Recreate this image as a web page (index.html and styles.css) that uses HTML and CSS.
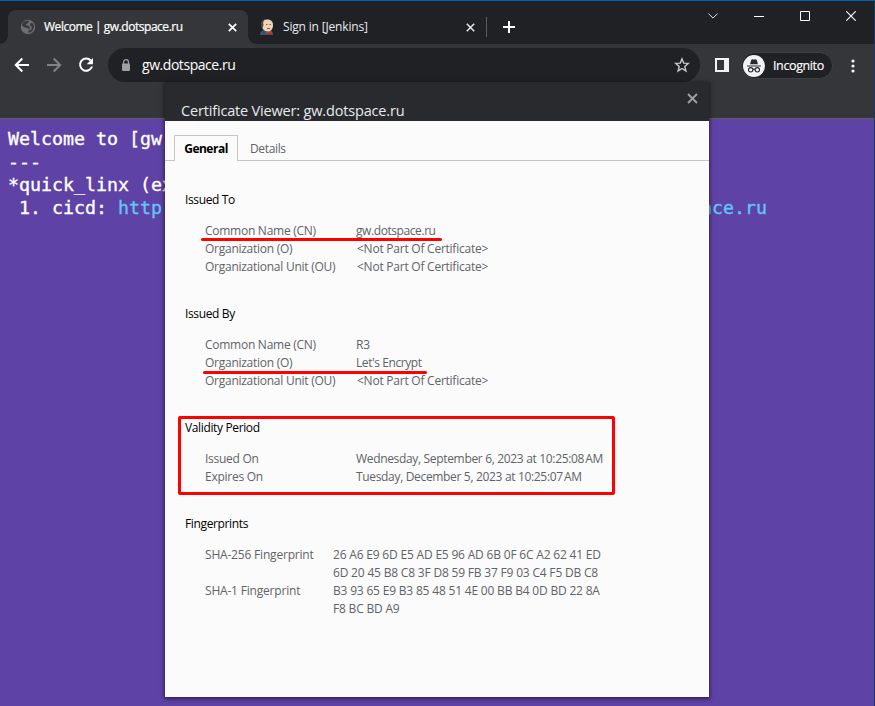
FILE: index.html
```html
<!DOCTYPE html>
<html lang="en">
<head>
<meta charset="utf-8">
<title>Welcome | gw.dotspace.ru</title>
<link rel="stylesheet" href="styles.css">
</head>
<body>
<div class="window">
  <header class="tabstrip">
    <div class="tab active">
      <svg class="favicon" width="16" height="16" viewBox="0 0 16 16"><circle cx="8" cy="8" r="7.2" fill="#6b6e73"/><path d="M3 3.500c2-2 5-2 6-1.500L8 4.200 6 5l.5 1.600L9 7l1 2-1 1.500L7.500 9 4 8.200 2 6zM10.500 4l2.500.5 1 3-1 3.500-2 2-3 .8.5-2 3-1.500.3-2L10 6z" fill="#37383c"/></svg>
      <span class="tab-title t1">Welcome | gw.dotspace.ru</span>
      <svg class="tab-x" width="9" height="9" viewBox="0 0 9 9"><path d="M.8.8l7.400 7.400M8.200.8L.8 8.200" stroke="#fff" stroke-width="1.700"/></svg>
    </div>
    <div class="tab">
      <svg class="favicon" width="16" height="16" viewBox="0 0 16 16"><path d="M1 16l.5-3L5 11h6l3 3v2z" fill="#315769"/><path d="M2.500 5c0-3 2-4.500 5.500-4.500S14 2 14 6c0 4-2 6.500-5 6.500C5.500 12.500 2.500 10 2.500 5z" fill="#efd4b5"/><path d="M2.500 8C1 4 3 .8 6 .6 4 2 4 4 4.500 6L3.500 9z" fill="#504742"/><path d="M7 5.500h1.500m2 0H12M8 9.500h3" stroke="#756155"/><path d="M7 12l2.500 1.200L13 12v3.500l-3-1.200L7 15.500z" fill="#d52c30"/></svg>
      <span class="tab-title t2">Sign in [Jenkins]</span>
      <svg class="tab-x" width="9" height="9" viewBox="0 0 9 9"><path d="M.8.8l7.400 7.400M8.200.8L.8 8.200" stroke="#e8eaed" stroke-width="1.500"/></svg>
    </div>
    <i class="separator"></i>
    <svg class="new-tab" width="12" height="12" viewBox="0 0 12 12"><path d="M6 0v12M0 6h12" stroke="#fff" stroke-width="2"/></svg>
    <div class="controls">
      <svg width="10" height="6" viewBox="0 0 10 6"><path d="M.4.500L5 5.100 9.600.500" fill="none" stroke="#e0e0e0"/></svg>
      <svg width="10" height="10" viewBox="0 0 10 10"><path d="M0 5.500h10" stroke="#fff"/></svg>
      <svg width="10" height="10" viewBox="0 0 10 10"><path d="M.5.5h9v9h-9z" fill="none" stroke="#fff"/></svg>
      <svg width="10" height="10" viewBox="0 0 10 10"><path d="M.3.3l9.400 9.400M9.700.3L.3 9.700" stroke="#fff" stroke-width="1.100"/></svg>
    </div>
  </header>
  <nav class="toolbar">
    <svg class="back" width="16" height="16" viewBox="0 0 16 16"><path d="M15 8H2M8.300 1.500L1.800 8l6.500 6.500" fill="none" stroke="#fff" stroke-width="2"/></svg>
    <svg class="forward" width="16" height="16" viewBox="0 0 16 16"><path d="M1 8h13M7.700 1.500L14.200 8l-6.500 6.500" fill="none" stroke="#808185" stroke-width="2"/></svg>
    <svg class="reload" width="16" height="16" viewBox="0 0 16 16"><path d="M12.700 3.500A6.100 6.100 0 1 0 14 9.500" fill="none" stroke="#fff" stroke-width="2"/><path d="M15 1v6.300H8.700z" fill="#fff"/></svg>
    <div class="omnibox">
      <svg width="10" height="13" viewBox="0 0 10 13"><path d="M2.500 5V3.200a2.500 2.500 0 0 1 5 0V5" fill="none" stroke="#9aa0a6" stroke-width="1.300"/><rect x="1" y="4.500" width="8" height="7.500" rx="1" fill="#9aa0a6"/></svg>
      <span class="url">gw.dotspace.ru</span>
      <svg class="star" width="16" height="16" viewBox="0 0 16 16"><path d="M8 1.900l1.700 4.200 4.600.3-3.500 3 1.100 4.500L8 11.500l-3.900 2.400 1.100-4.500-3.500-3 4.600-.3z" fill="none" stroke="#c7cacd" stroke-width="1.400"/></svg>
    </div>
    <svg class="side" width="14" height="14" viewBox="0 0 14 14"><path d="M0 0h14v14H0zM2 2v10h7V2z" fill="#f1f3f4" fill-rule="evenodd"/></svg>
    <div class="profile">
      <svg width="22" height="22" viewBox="0 0 22 22"><circle cx="11" cy="11" r="11" fill="#f1f3f4"/><path d="M7 9.200l1.300-4.500 1.500-.4 1.200.4 1.200-.4 1.500.4L15 9.200z" fill="#292a2d"/><path d="M4 11h14M10 14.500q1-.8 2 0" fill="none" stroke="#292a2d" stroke-width="1.100"/><circle cx="7.700" cy="14.800" r="2.200" fill="none" stroke="#292a2d" stroke-width="1.100"/><circle cx="14.300" cy="14.800" r="2.200" fill="none" stroke="#292a2d" stroke-width="1.100"/></svg>
      <span>Incognito</span>
    </div>
    <svg class="menu" width="4" height="14" viewBox="0 0 4 14" fill="#f1f3f4"><circle cx="2" cy="2" r="1.600"/><circle cx="2" cy="7" r="1.600"/><circle cx="2" cy="12" r="1.600"/></svg>
  </nav>
  <main class="page">
    <div>Welcome to [gw</div>
    <div>---</div>
    <div>*quick_linx (ex</div>
    <div class="link-row"><span> 1. cicd: </span><a><span>http</span><span>ace.ru</span></a></div>
  </main>

  <section class="dialog">
    <div class="dialog-head"><h1>Certificate Viewer: gw.dotspace.ru</h1>
      <svg width="11" height="11" viewBox="0 0 11 11"><path d="M1 1l9 9M10 1l-9 9" stroke="#9aa0a6" stroke-width="1.900"/></svg>
    </div>
    <div class="dialog-tabs"><b>General</b><span>Details</span></div>
    <div class="details">
      <section>
        <h2>Issued To</h2>
        <dl>
          <dt><span class="mark m1">Common Name (CN)</span></dt><dd class="domain">gw.dotspace.ru</dd>
          <dt>Organization (O)</dt><dd class="none">&lt;Not Part Of Certificate&gt;</dd>
          <dt>Organizational Unit (OU)</dt><dd class="none">&lt;Not Part Of Certificate&gt;</dd>
        </dl>
      </section>
      <section>
        <h2>Issued By</h2>
        <dl>
          <dt>Common Name (CN)</dt><dd>R3</dd>
          <dt><span class="mark m2">Organization (O)</span></dt><dd class="domain">Let's Encrypt</dd>
          <dt>Organizational Unit (OU)</dt><dd class="none">&lt;Not Part Of Certificate&gt;</dd>
        </dl>
      </section>
      <section class="validity">
        <h2>Validity Period</h2>
        <dl>
          <dt>Issued On</dt><dd class="date">Wednesday, September 6, 2023 at 10:25:08&#8239;AM</dd>
          <dt>Expires On</dt><dd class="date">Tuesday, December 5, 2023 at 10:25:07&#8239;AM</dd>
        </dl>
      </section>
      <section>
        <h2>Fingerprints</h2>
        <dl class="prints">
          <dt>SHA-256 Fingerprint</dt><dd>26 A6 E9 6D E5 AD E5 96 AD 6B 0F 6C A2 62 41 ED<br>6D 20 45 B8 C8 3F D8 59 FB 37 F9 03 C4 F5 DB C8</dd>
          <dt>SHA-1 Fingerprint</dt><dd>B3 93 65 E9 B3 85 48 51 4E 00 BB B4 0D BD 22 8A<br>F8 BC BD A9</dd>
        </dl>
      </section>
    </div>
  </section>
</div>
</body>
</html>
```
FILE: styles.css
```css
*, *::before, *::after { box-sizing: border-box; }
body { margin: 0; overflow: hidden; font: 12px/18px "Open Sans", "Noto Sans", sans-serif; }
svg { display: block; flex: none; }
h1, h2, dl, dd { margin: 0; font-weight: 400; }
.window { position: relative; width: 875px; height: 706px; background: #202124; border-top: 1px solid #0063b1; border-right: 1px solid #173d59; display: flex; flex-direction: column; }
.tabstrip { height: 43px; padding: 9px 0 0 8px; display: flex; align-items: flex-start; }
.tab { width: 238px; height: 34px; display: flex; align-items: center; padding: 0 11px; color: #e8eaed; }
.tab.active { position: relative; width: 240px; padding: 0 11px 0 12px; background: #35363a; border-radius: 8px 8px 0 0; color: #fff; }
.tab.active::before, .tab.active::after { content: ""; position: absolute; bottom: 0; width: 8px; height: 8px; }
.tab.active::before { left: -8px; background: radial-gradient(circle at 0 0, #202124 7.5px, #35363a 8px); }
.tab.active::after { right: -8px; background: radial-gradient(circle at 100% 0, #202124 7.5px, #35363a 8px); }
.tab-title { margin-left: 8px; flex: 1; white-space: nowrap; }
.t1 { letter-spacing: -.47px; -webkit-text-stroke: .2px; }
.t2 { letter-spacing: -.17px; }
.separator { width: 1px; height: 20px; margin-top: 7px; background: #5a5c60; }
.new-tab { margin: 11px 0 0 16px; }
.controls { margin: 0 18px 0 auto; padding-top: 1px; height: 11px; display: flex; align-items: center; gap: 36px; }
.toolbar { height: 75px; padding-top: 4px; background: #35363a; border-bottom: 1px solid #5d5d60; display: flex; align-items: flex-start; }
.toolbar > .back { margin: 9px 0 0 14px; }
.toolbar > .forward { margin: 9px 0 0 16px; }
.toolbar > .reload { margin: 9px 0 0 16px; }
.omnibox { width: 592px; height: 34px; margin-left: 14px; padding: 0 10px 0 13px; border-radius: 17px; background: #202124; color: #fff; display: flex; align-items: center; }
.url { flex: 1; margin-left: 11px; font-size: 14px; letter-spacing: -.45px; }
.side { margin: 10px 0 0 15px; }
.profile { width: 92px; height: 27px; margin: 4px 0 0 12px; padding-left: 1px; border: 1px solid #3f4043; border-radius: 14px; background: #202124; color: #fff; display: flex; align-items: center; gap: 8px; font-size: 12.5px; letter-spacing: -.38px; -webkit-text-stroke: .15px; }
.menu { margin: 11px 0 0 18px; }
.page { flex: 1; padding: 8px 8px 0; background: #5f42a6; color: #fff; font: 18.27px/23px "DejaVu Sans Mono", monospace; -webkit-text-stroke: .35px; }
.page span, .page > div { white-space: pre; }
.link-row { display: flex; }
.link-row a { width: 649px; display: flex; justify-content: space-between; color: #61c5f7; }
.dialog { position: absolute; left: 165px; top: 81px; width: 544px; height: 615px; background: #fbfbfb; box-shadow: 0 1px 4px 1px rgba(0,0,0,.5); color: #5f6368; }
.dialog-head { height: 39px; padding: 11px 11px 0 16px; background: #292a2d; color: #e8eaed; display: flex; justify-content: space-between; }
.dialog-head h1 { font-size: 14.5px; line-height: 20px; margin-top: 8px; letter-spacing: -.17px; }
.dialog-tabs { display: flex; height: 40px; padding: 14px 0 0 9px; line-height: 27px; background: linear-gradient(#c6c6c6, #c6c6c6) bottom / 100% 1px no-repeat; }
.dialog-tabs b { width: 64px; text-align: center; border: 1px solid #c6c6c6; border-bottom: 0; background: #fbfbfb; color: #000; letter-spacing: -.5px; line-height: 26px; }
.dialog-tabs span { margin-left: 12px; letter-spacing: -.35px; }
.details { padding: 30px 20px; display: grid; row-gap: 29px; letter-spacing: -.26px; white-space: nowrap; }
.details section { position: relative; }
h2 { font-size: 12px; line-height: 18px; color: #000; margin-bottom: 13px; letter-spacing: -.36px; }
dl { padding-left: 20px; display: grid; grid-template-columns: 151px auto; }
.none { padding-left: 1px; letter-spacing: -.24px; }
.domain { letter-spacing: -.42px; }
.date { letter-spacing: -.33px; }
.prints { grid-template-columns: 128px auto; letter-spacing: -.19px; }
.mark { position: relative; }
.mark::after { content: ""; position: absolute; height: 3px; border-radius: 2px; background: #f00; }
.m1::after { left: -4px; top: 16px; width: 241px; }
.m2::after { left: -2px; top: 17px; width: 224px; }
.validity::after { content: ""; position: absolute; left: -7px; top: -3px; width: 437px; height: 79px; border: 3px solid #f00; border-radius: 2px; }
```
